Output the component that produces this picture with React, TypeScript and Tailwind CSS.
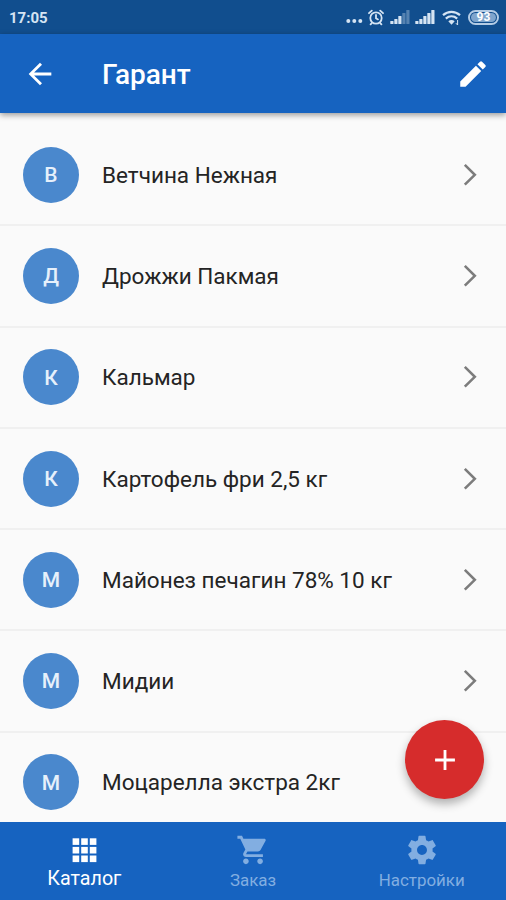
import React from 'react';
import { MdArrowBack, MdAdd, MdEdit } from 'react-icons/md';

interface ProductRowProps {
  name: string;
}

interface NavItemProps {
  label: string;
  icon: React.ReactNode;
  active?: boolean;
}

const products = [
  'Ветчина Нежная',
  'Дрожжи Пакмая',
  'Кальмар',
  'Картофель фри 2,5 кг',
  'Майонез печагин 78% 10 кг',
  'Мидии',
  'Моцарелла экстра 2кг',
];

const AlarmIcon = () => (
  <svg className="w-4 h-[17px]" viewBox="0 0 16 17" fill="none" stroke="currentColor" strokeWidth="1.8" strokeLinecap="round">
    <circle cx="8" cy="9" r="5.7" />
    <path d="M8 6v3.2l2 1.2M1 4.2l2.8-2.6M15 4.2l-2.8-2.6M3.8 14l-1.2 1.4M12.2 14l1.2 1.4" />
  </svg>
);

const SignalIcon = ({ level }: { level: number }) => (
  <svg className="w-5 h-4" viewBox="0 0 20 16" fill="currentColor">
    {[3, 5, 8, 11, 14].map((height, i) => (
      <rect key={height} x={i * 4 + 0.3} y={15 - height} width="3.2" height={height} rx="0.6" opacity={i < level ? 1 : 0.35} />
    ))}
  </svg>
);

const WifiIcon = () => (
  <svg className="w-[19px] h-4" viewBox="0 0 19 16" fill="none" stroke="currentColor" strokeWidth="2.2">
    <path d="M1 5.2C6 .8 13 .8 18 5.2" />
    <path d="M3.8 8.6c3.4-2.9 8-2.9 11.4 0" />
    <path d="M6.3 11.2c2-1.6 4.4-1.6 6.4 0L9.5 14.8z" fill="currentColor" stroke="none" />
    <path d="M15.6 10v5M13.9 13.2l1.7 1.8" strokeWidth="1" />
  </svg>
);

const GridIcon = () => (
  <svg className="size-[34px]" viewBox="0 0 34 34" fill="currentColor">
    {[5.3, 13.9, 22.5].map((y) =>
      [5.6, 14.2, 22.8].map((x) => <rect key={`${x}-${y}`} x={x} y={y} width="6.6" height="6.6" />)
    )}
  </svg>
);

const CartIcon = () => (
  <svg className="size-[34px]" viewBox="0 0 24 24" fill="currentColor">
    <path d="M7 18c-1.1 0-1.99.9-1.99 2S5.9 22 7 22s2-.9 2-2-.9-2-2-2zM1 2v2h2l3.6 7.59-1.35 2.45c-.16.28-.25.61-.25.96 0 1.1.9 2 2 2h12v-2H7.42c-.14 0-.25-.11-.25-.25l.03-.12.9-1.63h7.45c.75 0 1.41-.41 1.75-1.03l3.58-6.49c.08-.14.12-.31.12-.48 0-.55-.45-1-1-1H5.21l-.94-2H1zm16 16c-1.1 0-1.99.9-1.99 2s.89 2 1.99 2 2-.9 2-2-.9-2-2-2z" />
  </svg>
);

const GearIcon = () => (
  <svg className="size-[34px]" viewBox="0 0 24 24" fill="currentColor">
    <path d="M19.43 12.98c.04-.32.07-.64.07-.98s-.03-.66-.07-.98l2.11-1.65c.19-.15.24-.42.12-.64l-2-3.46c-.12-.22-.39-.3-.61-.22l-2.49 1c-.52-.4-1.08-.73-1.69-.98l-.38-2.65C14.46 2.18 14.25 2 14 2h-4c-.25 0-.46.18-.49.42l-.38 2.65c-.61.25-1.17.59-1.69.98l-2.49-1c-.23-.09-.49 0-.61.22l-2 3.46c-.13.22-.07.49.12.64l2.11 1.65c-.04.32-.07.65-.07.98s.03.66.07.98l-2.11 1.65c-.19.15-.24.42-.12.64l2 3.46c.12.22.39.3.61.22l2.49-1c.52.4 1.08.73 1.69.98l.38 2.65c.03.24.24.42.49.42h4c.25 0 .46-.18.49-.42l.38-2.65c.61-.25 1.17-.59 1.69-.98l2.49 1c.23.09.49 0 .61-.22l2-3.46c.12-.22.07-.49-.12-.64l-2.11-1.65zM12 15.5c-1.93 0-3.5-1.57-3.5-3.5s1.57-3.5 3.5-3.5 3.5 1.57 3.5 3.5-1.57 3.5-3.5 3.5z" />
  </svg>
);

const StatusBar = () => (
  <div className="flex h-[34px] shrink-0 items-center bg-[#114e8e] pl-[9px] pr-[7px] text-[#d5e4f3]">
    <span className="pt-[2px] text-[15px] font-bold leading-none">17:05</span>
    <div className="ml-auto flex items-center">
      <svg className="mr-1 mt-2 w-[18px] h-1" viewBox="0 0 18 4" fill="currentColor">
        <circle cx="2.3" cy="2" r="2" />
        <circle cx="8.3" cy="2" r="2" />
        <circle cx="14.3" cy="2" r="2" />
      </svg>
      <AlarmIcon />
      <span className="ml-[6px] flex"><SignalIcon level={3} /></span>
      <span className="ml-[5px] flex"><SignalIcon level={5} /></span>
      <span className="ml-[7px] mt-[2px] flex"><WifiIcon /></span>
      <span className="ml-[7px] flex h-[15px] w-[31px] items-center justify-center rounded-full border-2 border-[#b4cce5] p-px">
        <span className="flex h-full w-full items-center justify-center rounded-full bg-[#7fa5cd] text-[12px] font-bold leading-none text-white">93</span>
      </span>
    </div>
  </div>
);

const ProductRow: React.FC<ProductRowProps> = ({ name }) => (
  <li className="flex h-[101.25px] shrink-0 items-center border-b-2 border-[#f0f0f0] pl-[23px] pr-[29px]">
    <span className="flex size-14 items-center justify-center rounded-full bg-[#4a88cd] pt-[2px] text-[21px] font-medium text-[#e6f0fb]">
      {name[0]}
    </span>
    <span className="ml-[23px] whitespace-nowrap pt-[2px] text-[22.5px] text-[#242424]">{name}</span>
    <svg className="ml-auto h-6 w-[14px]" viewBox="0 0 14 24" fill="none" stroke="#7c7c7c" strokeWidth="2.6">
      <path d="M1.8 1.9L11.8 11.8L1.8 21.7" />
    </svg>
  </li>
);

const NavItem: React.FC<NavItemProps> = ({ label, icon, active }) => (
  <button className={`flex flex-1 flex-col items-center pt-[11px] ${active ? 'text-white' : 'text-[#82aee1]'}`}>
    {icon}
    <span className={`flex h-[22px] items-center leading-none ${active ? 'mt-px text-[19.7px]' : 'mt-[2px] text-[16.9px]'}`}>{label}</span>
  </button>
);

export default function App() {
  return (
    <div className="relative flex h-[900px] w-[506px] flex-col overflow-hidden bg-[#fafafa] font-[Roboto,sans-serif]">
      <StatusBar />
      <header className="z-10 flex h-[79px] shrink-0 items-center bg-[#1663c0] pl-[23px] pr-4 text-white shadow-[0_2px_6px_rgba(0,0,0,0.4)]">
        <MdArrowBack size={34} />
        <h1 className="ml-[45px] pt-[2px] text-[28px] font-medium">Гарант</h1>
        <MdEdit size={34} className="ml-auto" />
      </header>
      <ul className="flex min-h-0 flex-1 flex-col overflow-hidden pt-[12.2px]">
        {products.map((name) => (
          <ProductRow key={name} name={name} />
        ))}
      </ul>
      <button className="absolute right-[22px] bottom-[101px] flex size-[79px] items-center justify-center rounded-full bg-[#d62c2c] text-white shadow-[0_5px_10px_rgba(0,0,0,0.3)]">
        <MdAdd size={34} />
      </button>
      <nav className="z-10 flex h-[78px] shrink-0 bg-[#1663c0]">
        <NavItem label="Каталог" icon={<GridIcon />} active />
        <NavItem label="Заказ" icon={<CartIcon />} />
        <NavItem label="Настройки" icon={<GearIcon />} />
      </nav>
    </div>
  );
}
